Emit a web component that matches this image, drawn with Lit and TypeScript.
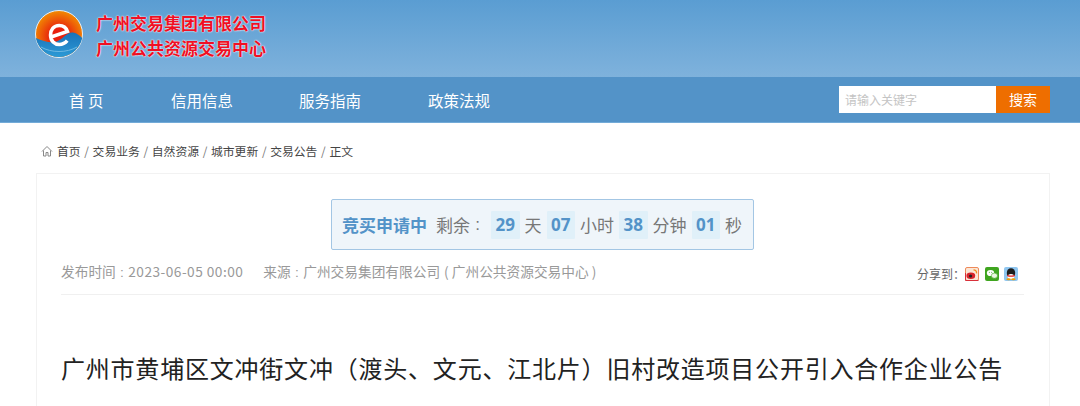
import { LitElement, html, css } from "lit";
import { customElement } from "lit/decorators.js";

const FONT = css`"Noto Sans CJK SC", "Liberation Sans", sans-serif`;

@customElement("app-root")
export class AppRoot extends LitElement {
  static styles = css`
    :host { display: block; width: 1080px; height: 406px; overflow: hidden; background: #fff; font-family: ${FONT}; }
    .brand { height: 77px; box-sizing: border-box; background: linear-gradient(#5a9dd2, #7fb2dc); display: flex; align-items: center; padding: 0 0 9px 35px; gap: 13px; }
    .logo { width: 48px; height: 48px; display: block; }
    .names { color: #ef0f24; font-size: 17px; font-weight: 700; line-height: 25px; text-shadow: 0 0 2px #fff, 0 0 1px #fff; margin-top: 1px; }
    .nav { height: 46px; box-sizing: border-box; background: #5393c8; border-bottom: 1px solid #73abd8; display: flex; align-items: center; padding: 0 30px 0 69px; }
    .nav a { color: #fff; font-size: 15.5px; white-space: pre; }
    .nav a.w1 { width: 102px; }
    .nav a.w2 { width: 128px; }
    .nav a.w3 { width: 129px; }
    .search { margin-left: auto; display: flex; height: 27px; }
    .input { width: 157px; box-sizing: border-box; background: #fff; color: #c4c4c4; font-size: 12px; line-height: 27px; padding-left: 6px; }
    .btn { width: 54px; background: #ee6e00; color: #fff; font-size: 14px; line-height: 27px; text-align: center; }
    .crumbs { height: 50px; display: flex; align-items: center; padding: 5px 0 0 41px; color: #444; font-size: 11.800px; box-sizing: border-box; }
    .crumbs svg { width: 12px; height: 12px; margin-right: 4px; }
    .crumbs i { font-style: normal; color: #777; width: 12px; text-align: center; }
    .card { margin: 0 30px 0 36px; border: 1px solid #f2f2f2; border-bottom: 0; height: 300px; box-sizing: border-box; padding: 25px 25px 0 24px; }
    .cd-wrap { display: flex; justify-content: center; }
    .cd { width: 423px; height: 51px; box-sizing: border-box; background: #eff5fa; border: 1px solid #a3c6e4; border-radius: 2px; display: flex; align-items: center; padding-left: 10px; color: #777; font-size: 17px; white-space: nowrap; }
    .cd b { color: #5393c8; font-weight: 700; }
    .cd .rem { margin-left: 9px; }
    .cd .colon { width: 21px; box-sizing: border-box; padding-right: 6px; text-align: center; font-family: "Liberation Sans", sans-serif; }
    .cd .n { width: 28.500px; height: 28px; background: #e0f0f9; color: #5393c8; font-weight: 700; font-size: 17px; line-height: 28px; text-align: center; font-family: "Open Sans", "Noto Sans", sans-serif; border-radius: 1px; }
    .cd .u { margin: 0 5px; }
    .meta { display: flex; align-items: center; height: 45px; box-sizing: border-box; padding-bottom: 2px; border-bottom: 1px solid #f0f0f0; color: #999; font-size: 13.700px; white-space: nowrap; }
    .meta .c { display: inline-block; width: 12.500px; text-align: center; font-family: "Liberation Sans", sans-serif; }
    .meta .time { letter-spacing: 0.47px; }
    .meta .src { margin-left: 20px; }
    .meta .p { display: inline-block; margin: 0 3px 0 4px; }
    .meta .p.end { margin: 0 0 0 3px; }
    .share { margin-left: auto; margin-top: 5px; display: flex; align-items: center; color: #666; font-size: 12px; gap: 5.500px; padding-right: 6px; }
    .share .lbl { display: block; width: 48px; margin-right: -5.500px; }
    .share svg { width: 14px; height: 14px; display: block; }
    h1 { margin: 55px 0 0 0; font-size: 24px; font-weight: 400; letter-spacing: 0.79px; line-height: 36px; color: #222; white-space: nowrap; }
  `;

  render() {
    return html`
      <div class="brand">
        <svg class="logo" viewBox="0 0 48 48">
          <defs>
            <radialGradient id="sun" cx="0.5" cy="0.55" r="0.6"><stop offset="0.3" stop-color="#e8200e"/><stop offset="1" stop-color="#f39a00"/></radialGradient>
            <linearGradient id="sea" x1="0" y1="0" x2="0" y2="1"><stop offset="0" stop-color="#1a72b8"/><stop offset="1" stop-color="#2b9ad6"/></linearGradient>
          </defs>
          <circle cx="24" cy="24" r="23.500" fill="url(#sun)" stroke="#e4eff7" stroke-width="1"/>
          <path d="M.8 28C8 31 14 33 20 32c8-2 11-10 18-9.500 4 .5 7 3.500 9.200 5.500C45 39 35 47 24 47 13 47 3 39 .8 28z" fill="url(#sea)"/>
          <path d="M6 37c10 6 26 6 36 0" stroke="#6fb9e3" stroke-width="1" fill="none"/>
          <path d="M16 27L32.500 21.500C31 17 27.500 15.500 24.200 15.500 18.500 15.500 15.500 20 15.500 25c0 6 4 9.500 8.700 9.500 3.300 0 6-1.300 8-3.800" fill="none" stroke="#fff" stroke-width="3.500"/>
        </svg>
        <div class="names"><div>广州交易集团有限公司</div><div>广州公共资源交易中心</div></div>
      </div>
      <div class="nav">
        <a class="w1">首 页</a><a class="w2">信用信息</a><a class="w3">服务指南</a><a>政策法规</a>
        <div class="search"><div class="input">请输入关键字</div><div class="btn">搜索</div></div>
      </div>
      <div class="crumbs">
        <svg viewBox="0 0 12 12" fill="none" stroke="#888" stroke-width="1"><path d="M1 6.500l5-5 5 5M2.500 5.500V11h2.500V7.500h2V11h2.500V5.500"/></svg>
        <span>首页</span><i>/</i><span>交易业务</span><i>/</i><span>自然资源</span><i>/</i><span>城市更新</span><i>/</i><span>交易公告</span><i>/</i><span>正文</span>
      </div>
      <div class="card">
        <div class="cd-wrap"><div class="cd">
          <b>竞买申请中</b><span class="rem">剩余</span><span class="colon">:</span>
          <span class="n">29</span><span class="u">天</span>
          <span class="n">07</span><span class="u">小时</span>
          <span class="n">38</span><span class="u">分钟</span>
          <span class="n">01</span><span class="u">秒</span>
        </div></div>
        <div class="meta">
          <span>发布时间<span class="c">:</span><span class="time">2023-06-05 00:00</span></span>
          <span class="src">来源<span class="c">:</span>广州交易集团有限公司<span class="p">(</span>广州公共资源交易中心<span class="p end">)</span></span>
          <div class="share"><span class="lbl">分享到：</span>
            <svg viewBox="0 0 14 14"><rect x=".5" y=".5" width="13" height="13" rx="1.500" fill="#fbe6d6" stroke="#ee8a5a"/><path d="M.5 13.500V6" stroke="#d8303a"/><path d="M.5 13.500h13" stroke="#d8303a"/><ellipse cx="5.800" cy="8.800" rx="4.400" ry="3.300" fill="#d8232a"/><circle cx="5.600" cy="9" r="1.600" fill="#222"/><path d="M8.500 2.800c2.200 0 3.300 1.500 3 3.500" stroke="#f09020" stroke-width="1.300" fill="none"/></svg>
            <svg viewBox="0 0 14 14"><rect width="14" height="14" rx="2" fill="#3fa51f"/><ellipse cx="5.500" cy="6" rx="3.700" ry="3.100" fill="#fff"/><ellipse cx="9.400" cy="8.700" rx="3.100" ry="2.600" fill="#eaf7e2" stroke="#3fa51f" stroke-width=".6"/><circle cx="4.300" cy="5.300" r=".5" fill="#3fa51f"/><circle cx="6.700" cy="5.300" r=".5" fill="#3fa51f"/></svg>
            <svg viewBox="0 0 14 14"><rect width="14" height="14" rx="2" fill="#8fc6f0"/><ellipse cx="7" cy="6" rx="4.200" ry="4.800" fill="#1c1c1c"/><ellipse cx="7" cy="9.500" rx="3.300" ry="2.600" fill="#fff"/><path d="M3 7.800c1.600 1 6.400 1 8 0l-.3 1.500c-1.900.7-5.400.7-7.400 0z" fill="#e02020"/><ellipse cx="4.600" cy="12.300" rx="2.200" ry="1" fill="#f0a000"/><ellipse cx="9.400" cy="12.300" rx="2.200" ry="1" fill="#f0a000"/></svg>
          </div>
        </div>
        <h1>广州市黄埔区文冲街文冲（渡头、文元、江北片）旧村改造项目公开引入合作企业公告</h1>
      </div>
    `;
  }
}
